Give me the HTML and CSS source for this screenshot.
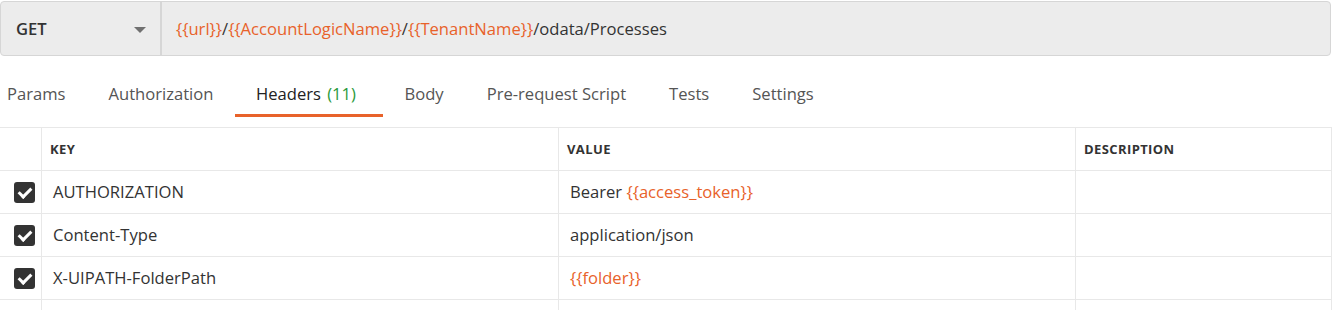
FILE: index.html
```html
<html lang="en"><head>
    <meta charset="UTF-8">
    <meta name="viewport" content="width=device-width, initial-scale=1.0">
    <title>Request Headers</title>
    <link rel="stylesheet" href="styles.css">
  </head>
  <body>
    <!-- URL Bar -->
    <div class="url-bar">
      <div class="method">
        <span>GET</span>
        <span class="caret"></span>
      </div>
      <div class="url"><span class="var">{{url}}</span>/<span class="var">{{AccountLogicName}}</span>/<span class="var">{{TenantName}}</span>/odata/Processes</div>
    </div>

    <!-- Tabs -->
    <div class="tabs">
      <div class="tab">Params</div>
      <div class="tab">Authorization</div>
      <div class="tab active">Headers <span class="count">(11)</span></div>
      <div class="tab">Body</div>
      <div class="tab">Pre-request Script</div>
      <div class="tab">Tests</div>
      <div class="tab">Settings</div>
    </div>

    <!-- Headers Table -->
    <div class="table">
      <div class="row head">
        <div class="cell check"></div>
        <div class="cell">KEY</div>
        <div class="cell">VALUE</div>
        <div class="cell">DESCRIPTION</div>
      </div>
      <div class="row">
        <div class="cell check"><span class="box"></span></div>
        <div class="cell">AUTHORIZATION</div>
        <div class="cell">Bearer <span class="var">{{access_token}}</span></div>
        <div class="cell"></div>
      </div>
      <div class="row">
        <div class="cell check"><span class="box"></span></div>
        <div class="cell">Content-Type</div>
        <div class="cell">application/json</div>
        <div class="cell"></div>
      </div>
      <div class="row">
        <div class="cell check"><span class="box"></span></div>
        <div class="cell">X-UIPATH-FolderPath</div>
        <div class="cell"><span class="var">{{folder}}</span></div>
        <div class="cell"></div>
      </div>
      <div class="row">
        <div class="cell check"></div>
        <div class="cell"></div>
        <div class="cell"></div>
        <div class="cell"></div>
      </div>
    </div>
  </body></html>
```

FILE: styles.css
```css
/* General Styling */
body {
  font-family: "Open Sans", Arial, sans-serif;
  margin: 0;
  padding: 0;
  background-color: #ffffff;
  color: #333;
  overflow: hidden;
}

/* URL Bar */
.url-bar {
  display: flex;
  height: 53px;
  margin-top: 1px;
  margin-right: 1px;
  border: 1px solid #d6d6d6;
  border-radius: 4px;
  background-color: #ececec;
  font-size: 16.6px;
}

.method {
  display: flex;
  align-items: center;
  justify-content: space-between;
  width: 130px;
  padding: 0 14px 0 15px;
  border-right: 2px solid #d6d6d6;
  font-weight: 600;
  color: #333;
}

.caret {
  width: 0;
  height: 0;
  border-left: 6px solid transparent;
  border-right: 6px solid transparent;
  border-top: 6px solid #707070;
  margin-top: 2px;
}

.url {
  padding-left: 14px;
  line-height: 53px;
  color: #333;
  white-space: nowrap;
}

.var {
  color: #e8622a;
}

/* Tabs */
.tabs {
  display: flex;
  margin-bottom: 10px;
  font-size: 16.6px;
}

.tab {
  padding: 27px 21.5px 9px;
  line-height: 22px;
  color: #555;
  border-bottom: 3px solid transparent;
}

.tab:first-child {
  padding-left: 7px;
}

.tab.active {
  color: #222;
  border-bottom-color: #e8622a;
  padding-left: 21px;
  padding-right: 27px;
}

.count {
  margin-left: 2px;
  color: #2a9a3b;
}

/* Headers Table */
.table {
  border-top: 1px solid #e8e8e8;
}

.row {
  display: grid;
  grid-template-columns: 42px 517px 517px 1fr;
  height: 43px;
  border-bottom: 1px solid #e8e8e8;
  box-sizing: border-box;
}

.cell {
  padding-left: 11px;
  line-height: 41px;
  border-right: 1px solid #e8e8e8;
  font-size: 16.6px;
  color: #333;
  white-space: nowrap;
}

.row.head .cell {
  padding-left: 8px;
  line-height: 42px;
  font-size: 13px;
  letter-spacing: 0.4px;
  font-weight: 700;
  color: #333;
}

.cell.check {
  display: flex;
  align-items: center;
  padding-left: 14px;
}

.row.head .cell.check {
  padding-left: 0;
}

.box {
  position: relative;
  width: 21px;
  height: 21px;
  border-radius: 3px;
  background-color: #333;
}

.box::after {
  content: "";
  position: absolute;
  left: 7px;
  top: 3px;
  width: 5px;
  height: 10px;
  border-right: 3px solid #fff;
  border-bottom: 3px solid #fff;
  transform: rotate(45deg);
}
```
